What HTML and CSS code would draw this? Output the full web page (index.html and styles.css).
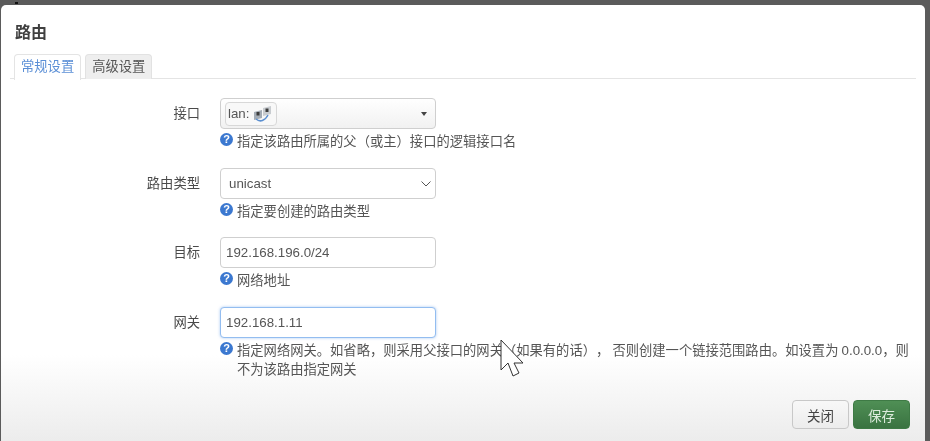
FILE: index.html
```html
<!DOCTYPE html>
<html lang="zh-CN">
<head>
<meta charset="utf-8">
<title>路由</title>
<link rel="stylesheet" href="styles.css">
</head>
<body>
<span class="speck"></span>
<main class="modal">
  <h2 class="title">路由</h2>
  <ul class="tabs">
    <li class="tab active">常规设置</li>
    <li class="tab">高级设置</li>
  </ul>
  <div class="form">
    <div class="row">
      <label class="label">接口</label>
      <div class="field">
        <div class="control dropdown">
          <span class="chip">lan:
            <svg class="net" viewBox="0 0 18 16" width="18" height="16" aria-hidden="true">
              <path d="M0 6l8-2v8l-8 2z" fill="#a4acb5"/>
              <path d="M9 2l8-2v8l-8 2z" fill="#c8ccd0"/>
              <rect x="2.500" y="6" width="3" height="3.500" fill="#3c3c3c"/>
              <rect x="11.500" y="2.500" width="3" height="3.500" fill="#3c3c3c"/>
              <path d="M2 13c4 3.500 9 2 12-4" fill="none" stroke="#5b8fd0" stroke-width="1.500"/>
            </svg>
          </span>
          <span class="caret"></span>
        </div>
        <p class="help"><span class="q">?</span><span>指定该路由所属的父（或主）接口的逻辑接口名</span></p>
      </div>
    </div>
    <div class="row">
      <label class="label">路由类型</label>
      <div class="field">
        <div class="control select">unicast
          <svg class="chev" viewBox="0 0 10 6" width="10" height="6" aria-hidden="true"><path d="M.5.5 5 5 9.500.5" fill="none" stroke="#555" stroke-width="1"/></svg>
        </div>
        <p class="help"><span class="q">?</span><span>指定要创建的路由类型</span></p>
      </div>
    </div>
    <div class="row">
      <label class="label">目标</label>
      <div class="field">
        <div class="control">192.168.196.0/24</div>
        <p class="help"><span class="q">?</span><span>网络地址</span></p>
      </div>
    </div>
    <div class="row">
      <label class="label">网关</label>
      <div class="field">
        <div class="control focus">192.168.1.11</div>
        <p class="help wide"><span class="q">?</span><span>指定网络网关。如省略，则采用父接口的网关（如果有的话）， 否则创建一个链接范围路由。如设置为 0.0.0.0，则不为该路由指定网关</span></p>
      </div>
    </div>
  </div>
  <footer class="foot">
    <button class="btn">关闭</button>
    <button class="btn save">保存</button>
  </footer>
</main>
<svg class="cursor" viewBox="0 0 24 38" width="24" height="38" aria-hidden="true">
  <path d="M1 1v30l7-7 5 13 6-3-5-10h9z" fill="#fff" stroke="#333" stroke-width="1"/>
</svg>
</body>
</html>
```
FILE: styles.css
```css
* { box-sizing: border-box; }
html, body { margin: 0; height: 100%; }
body {
  width: 930px;
  height: 441px;
  overflow: hidden;
  position: relative;
  background: #5b5b5b;
  font-family: "Liberation Sans", "Noto Sans CJK SC", sans-serif;
  font-size: 13.3px;
  color: #404040;
  padding: 5px 5px 0 1px;
  filter: blur(0.35px);
  text-spacing-trim: space-all;
}
.speck {
  position: absolute;
  left: 15px;
  top: 2px;
  width: 3px;
  height: 2px;
  background: #111;
}
.modal {
  height: 436px;
  border-radius: 5px 5px 0 0;
  background: linear-gradient(#fff 0, #fff 350px, #ececec 436px);
  padding: 18px 9px 0 9px;
  display: flex;
  flex-direction: column;
}
.title {
  margin: 0 0 0 5px;
  font-size: 16px;
  line-height: 20px;
  font-weight: 700;
  color: #404040;
}
.tabs {
  list-style: none;
  display: flex;
  gap: 4px;
  margin: 11px 0 0;
  padding: 0 0 0 4px;
  border-bottom: 1px solid #e4e4e4;
  height: 25px;
}
.tab {
  padding: 0 6px;
  height: 25px;
  line-height: 24px;
  color: #555;
  background: #eee;
  border: 1px solid #e2e2e2;
  border-bottom: 0;
  border-radius: 4px 4px 0 0;
}
.tab.active {
  color: #5b8fd6;
  background: #fff;
  border-color: #e4e4e4;
  margin-bottom: -1px;
  height: 26px;
}
.form {
  margin-top: 19px;
  display: flex;
  flex-direction: column;
  gap: 16.67px;
}
.row {
  display: flex;
  gap: 20px;
}
.label {
  width: 190px;
  flex: none;
  text-align: right;
  line-height: 31px;
  color: #4a4a4a;
}
.field { flex: 1; min-width: 0; }
.control {
  position: relative;
  width: 216px;
  height: 31px;
  padding: 0 5px;
  line-height: 29px;
  border: 1px solid #cfcfcf;
  border-radius: 4px;
  background: #fff;
  color: #555;
}
.dropdown {
  padding: 3px 8px 2px 4px;
  background: linear-gradient(#fff, #f1f1f1);
  display: flex;
  align-items: center;
  justify-content: space-between;
}
.chip {
  display: flex;
  align-items: center;
  gap: 5px;
  height: 24px;
  padding: 0 4px 0 2px;
  line-height: 22px;
  border: 1px solid #d8d8d8;
  border-radius: 4px;
  background: #f8f8f8;
}
.net { display: block; }
.caret {
  width: 0;
  height: 0;
  border-left: 3px solid transparent;
  border-right: 3px solid transparent;
  border-top: 4px solid #444;
}
.select { padding-left: 8px; }
.chev { position: absolute; right: 4px; top: 12px; }
.focus {
  border-color: #93bdf0;
  box-shadow: 0 0 3px rgba(110, 165, 235, .6);
}
.help {
  margin: 3px 0 0;
  display: flex;
  gap: 4px;
  line-height: 19px;
  color: #555;
}
.wide { width: 695px; word-spacing: -0.6px; }
.q {
  flex: none;
  width: 13px;
  height: 13px;
  margin-top: 1px;
  border-radius: 50%;
  background: #3b78d0;
  color: #fff;
  font-size: 11px;
  font-weight: 700;
  line-height: 13px;
  text-align: center;
}
.foot {
  margin-top: auto;
  padding: 0 6px 12px 0;
  display: flex;
  justify-content: flex-end;
  gap: 4px;
}
.btn {
  width: 57px;
  height: 29px;
  padding: 0;
  font: inherit;
  font-size: 13.500px;
  color: #444;
  background: linear-gradient(#f8f8f8, #ececec);
  border: 1px solid #c8c8c8;
  border-radius: 4px;
}
.save {
  color: #dcebdc;
  background: linear-gradient(#4f8f55, #3a7341);
  border-color: #3e7a45;
}
.cursor {
  position: absolute;
  left: 500px;
  top: 339px;
}
```
